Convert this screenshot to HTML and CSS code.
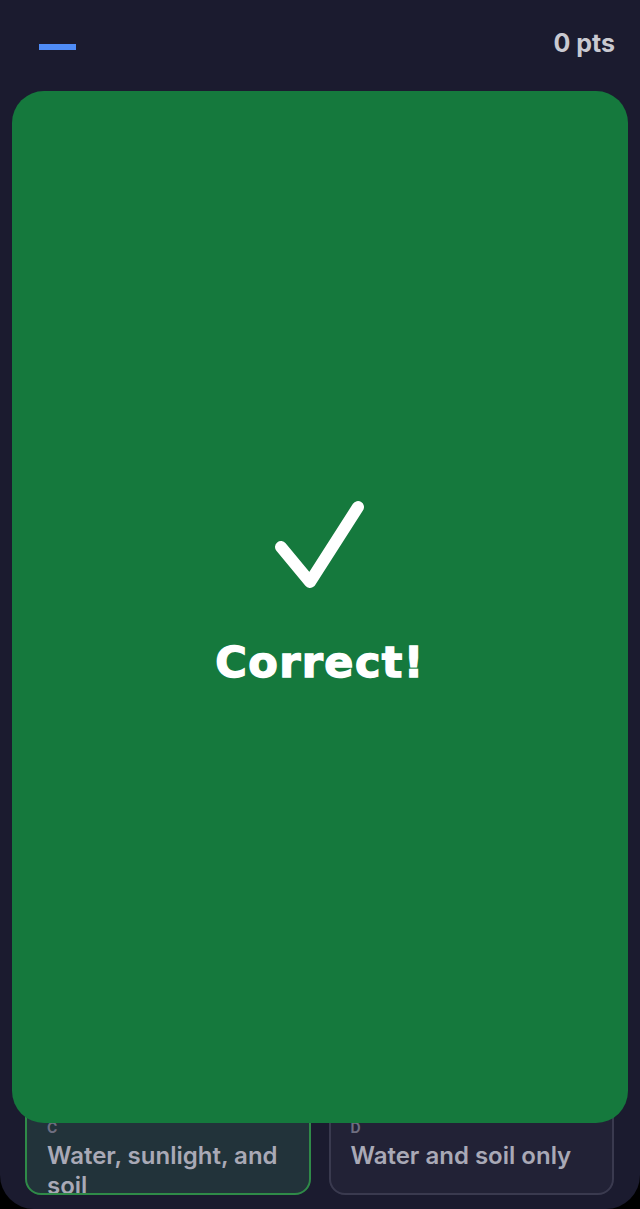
FILE: index.html
```html
<!DOCTYPE html>
<html lang="en">
<head>
    <meta charset="UTF-8">
    <title>Quiz</title>
    <link rel="stylesheet" href="styles.css">
</head>
<body>
<div class="screen">
    <header class="top">
        <div class="progress"></div>
        <div class="score">0 pts</div>
    </header>
    <main class="quiz">
        <div class="question"></div>
        <ul class="options">
            <li class="option"><span class="key">A</span><span class="text">Only water</span></li>
            <li class="option"><span class="key">B</span><span class="text">Sunlight only</span></li>
            <li class="option picked"><span class="key">C</span><span class="text">Water, sunlight, and soil</span></li>
            <li class="option"><span class="key">D</span><span class="text">Water and soil only</span></li>
        </ul>
        <div class="result">
            <svg class="tick" viewBox="0 0 100 100" width="100" height="100">
                <path d="M11 52 L40 87 L88 12" fill="none" stroke="#fff" stroke-width="12" stroke-linecap="round" stroke-linejoin="round"/>
            </svg>
            <div class="result-text">Correct!</div>
        </div>
    </main>
</div>
</body>
</html>
```
FILE: styles.css
```css
*{
    margin: 0;
    padding: 0;
    box-sizing: border-box;
    list-style: none;
}
html{
    background: #000;
}
body{
    font-family: Inter, "Noto Sans", sans-serif;
}
.screen{
    height: 1209px;
    background: #1b1b2f;
    border-radius: 0 0 34px 34px;
    display: flex;
    flex-direction: column;
    overflow: hidden;
}
.top{
    height: 91px;
    display: flex;
    align-items: center;
    justify-content: space-between;
    padding: 0 25px 0 39px;
}
.progress{
    width: 37px;
    height: 6px;
    background: #4f8cf7;
    margin-top: 3px;
}
.score{
    font-size: 25px;
    font-weight: 700;
    color: #c9c9d1;
    margin-top: -5px;
}
.quiz{
    flex: 1;
    position: relative;
    display: flex;
    flex-direction: column;
    justify-content: flex-end;
}
.question{
    flex: 1;
}
.options{
    display: grid;
    grid-template-columns: 1fr 1fr;
    gap: 18px;
    padding: 0 26px 14px 25px;
}
.option{
    height: 96px;
    overflow: hidden;
    border: 2px solid #3a3a4f;
    border-radius: 16px;
    background: #222236;
    padding: 19px 20px 0 20px;
    display: flex;
    flex-direction: column;
    gap: 5px;
}
.option.picked{
    background: #22333a;
    border-color: #2f8a48;
}
.key{
    font-size: 14px;
    line-height: 16px;
    font-weight: 700;
    color: #6e6e80;
}
.text{
    font-size: 24px;
    line-height: 30px;
    font-weight: 600;
    color: #a9a9b6;
}
.result{
    position: absolute;
    top: 0;
    left: 12px;
    right: 12px;
    bottom: 86px;
    background: #15793d;
    border-radius: 32px;
    display: flex;
    flex-direction: column;
    align-items: center;
    justify-content: center;
    padding-bottom: 32px;
}
.result-text{
    margin-top: 42px;
    font-family: "DejaVu Sans", sans-serif;
    font-size: 43px;
    line-height: 50px;
    letter-spacing: 1.4px;
    font-weight: 700;
    color: #fff;
    -webkit-text-stroke: 1.4px #fff;
}
```
